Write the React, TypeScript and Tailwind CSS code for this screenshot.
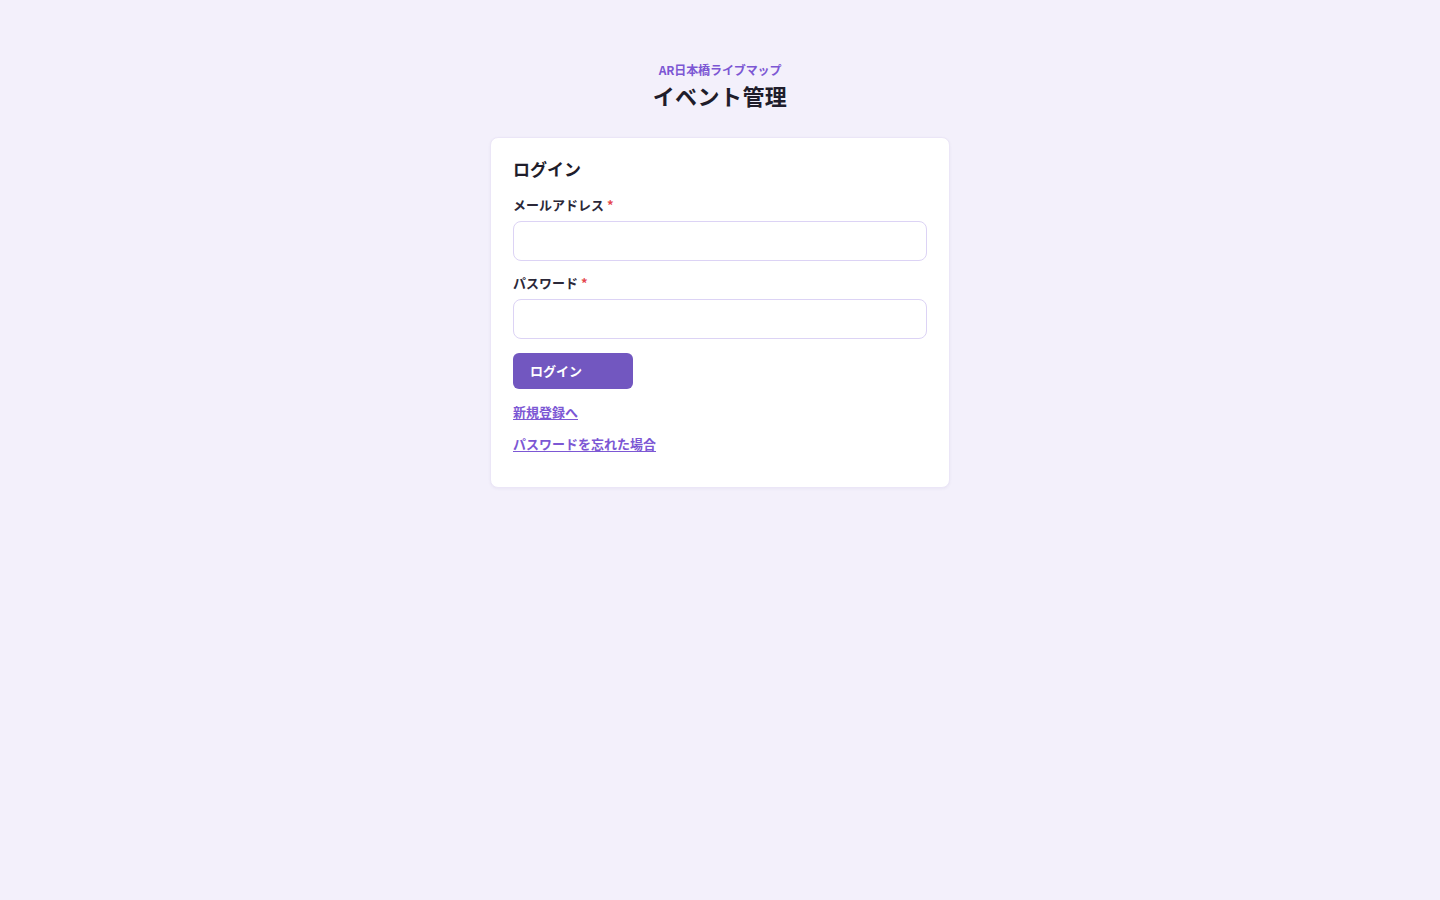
import React from "react";

export default function App() {
  return (
    <div
      className="min-h-screen w-full bg-[#f3f0fb] text-[#1f1d2b]"
      style={{ fontFamily: '"Noto Sans CJK JP", "Noto Sans", sans-serif' }}
    >
      <div className="flex flex-col items-center pt-[61px]">
        <div className="text-[12px] font-bold leading-[18px] tracking-[-0.01em] text-[#7c57d4]">AR日本橋ライブマップ</div>
        <h1 className="text-[22px] font-bold leading-[33px] tracking-[0.02em] text-[#1f1d2b]">イベント管理</h1>
        <div className="mt-[25px] w-[460px] rounded-[8px] border border-[#ebe6f7] bg-white px-[22px] pt-[21px] pb-[33px] shadow-[0_1px_3px_rgba(80,60,140,0.06)]">
          <h2 className="text-[17px] font-bold leading-[20px]">ログイン</h2>
          <form className="mt-[16px] flex flex-col" onSubmit={(e) => e.preventDefault()}>
            <label className="text-[13px] font-bold leading-[20px] text-[#2b2838]">
              メールアドレス <span className="text-[#e5484d]">*</span>
            </label>
            <input
              type="email"
              className="mt-[6px] h-[40px] w-full rounded-[8px] border border-[#dcd3f5] bg-white px-3 outline-none"
            />
            <label className="mt-[12px] text-[13px] font-bold leading-[20px] text-[#2b2838]">
              パスワード <span className="text-[#e5484d]">*</span>
            </label>
            <input
              type="password"
              className="mt-[6px] h-[40px] w-full rounded-[8px] border border-[#dcd3f5] bg-white px-3 outline-none"
            />
            <button
              type="submit"
              className="mt-[14px] h-[36px] w-[120px] rounded-[6px] bg-[#7257c0] pl-[17px] text-left text-[13px] font-bold text-white"
            >
              ログイン
            </button>
          </form>
          <div className="mt-[13px] flex flex-col gap-[12px]">
            <a href="#" className="w-fit text-[13px] font-bold leading-[20px] text-[#7c57d4] underline underline-offset-2">
              新規登録へ
            </a>
            <a href="#" className="w-fit text-[13px] font-bold leading-[20px] text-[#7c57d4] underline underline-offset-2">
              パスワードを忘れた場合
            </a>
          </div>
        </div>
      </div>
    </div>
  );
}
